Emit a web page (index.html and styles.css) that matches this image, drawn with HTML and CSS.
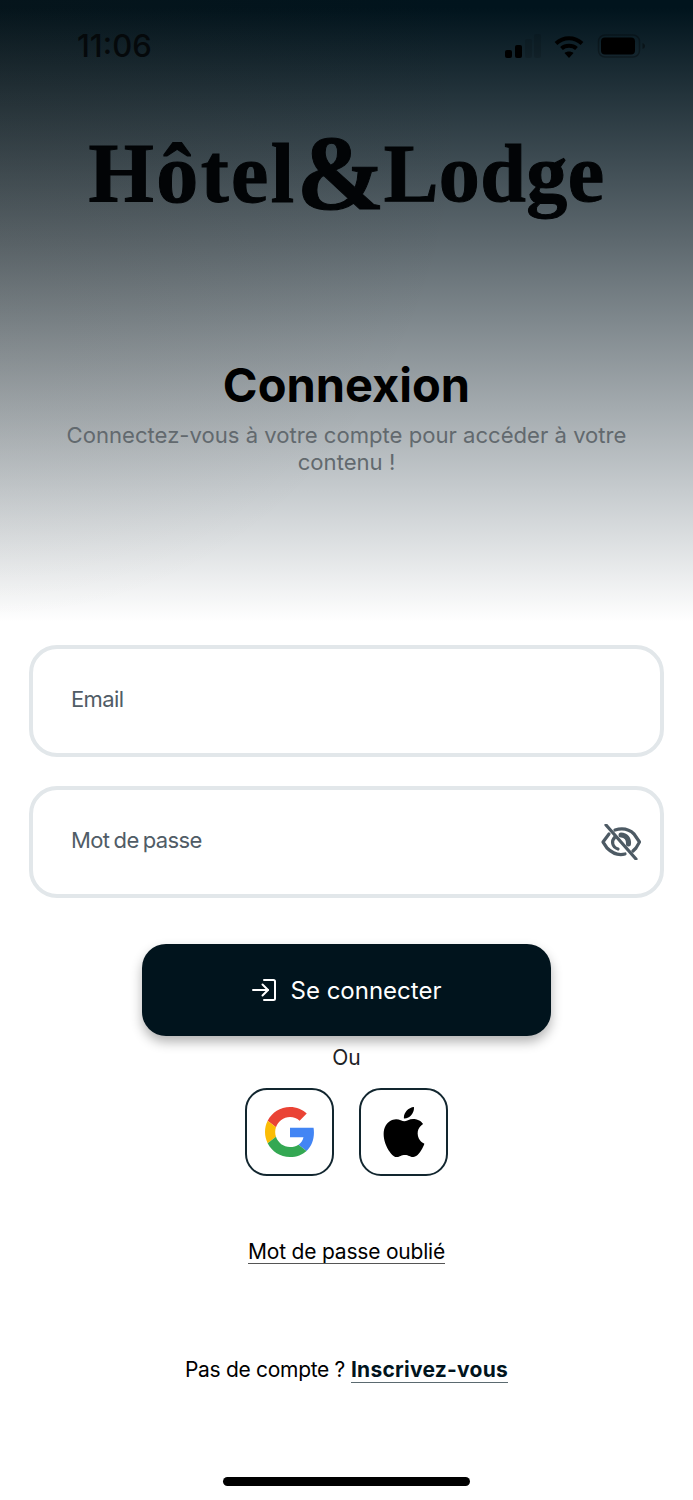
FILE: index.html
```html
<!DOCTYPE html>
<html lang="fr">

<head>
  <meta charset="UTF-8">
  <meta name="viewport" content="width=device-width, initial-scale=1.0">
  <title>Connexion</title>
  <link rel="stylesheet" href="styles.css">
</head>

<body>
  <header class="hero">
    <div class="status-bar">
      <span class="time">11:06</span>
      <div class="status-icons">
        <svg class="signal" viewBox="0 0 36 24" fill="#000">
          <rect x="0" y="16" width="7" height="8" rx="2" />
          <rect x="10" y="11" width="7" height="13" rx="2" />
          <rect x="20" y="5" width="7" height="19" rx="2" opacity="0.12" />
          <rect x="29" y="0" width="7" height="24" rx="2" opacity="0.12" />
        </svg>
        <svg class="wifi" viewBox="0 0 30 23" fill="none" stroke="#000" stroke-width="4">
          <path d="M2 8.500C9.500 1.500 20.500 1.500 28 8.500" />
          <path d="M7.500 13.500C11.500 9.800 18.500 9.800 22.500 13.500" />
          <path d="M15 23 10.500 18C13 16 17 16 19.500 18Z" fill="#000" stroke="none" />
        </svg>
        <svg class="battery" viewBox="0 0 48 24">
          <rect x="1" y="1" width="41" height="22" rx="6.500" fill="none" stroke="#000" stroke-opacity="0.3" stroke-width="1.500" />
          <rect x="3.500" y="3.500" width="34" height="17" rx="4" fill="#000" />
          <path d="M45 9c1.500.5 2.500 1.500 2.500 3s-1 2.500-2.500 3z" fill="#000" fill-opacity="0.4" />
        </svg>
      </div>
    </div>

    <div class="logo"><span class="logo-hotel">Hôtel</span><span class="logo-amp">&amp;</span><span>Lodge</span></div>

    <h1>Connexion</h1>
    <p class="subtitle">Connectez-vous à votre compte pour accéder à votre contenu !</p>
  </header>

  <main>
    <form class="fields">
      <div class="field"><span>Email</span></div>
      <div class="field">
        <span>Mot de passe</span>
        <svg class="eye" viewBox="0 0 40 36" fill="none" stroke="#4d5a64" stroke-width="3.200" stroke-linecap="round" stroke-linejoin="round">
          <path d="M8 10 2 18l4 6c6 6 12 7.500 18 6" />
          <path d="M14 6c7-2 14-1 19 4l5.500 8-3.500 6-3 3" />
          <path d="M14 13c-4 4-3 10 3 12" />
          <path d="M20 11c5 0 8 4 7.500 9" stroke-width="5" />
          <path d="M5 1l30 34" />
        </svg>
      </div>
    </form>

    <a class="submit">
      <svg viewBox="0 0 24 22" fill="none" stroke="#fff" stroke-width="2" stroke-linecap="round" stroke-linejoin="round">
        <path d="M12 1h9.500a1.500 1.500 0 0 1 1.500 1.500v17a1.500 1.500 0 0 1-1.500 1.500H12" />
        <path d="M1 11h15" />
        <path d="M10.500 5.500 16 11l-5.500 5.500" />
      </svg>
      Se connecter
    </a>

    <p class="or">Ou</p>

    <div class="socials">
      <a class="social">
        <svg class="google" viewBox="0 0 48 48">
          <path fill="#EA4335" d="M24 9.500c3.540 0 6.710 1.220 9.210 3.600l6.850-6.850C35.900 2.380 30.470 0 24 0 14.620 0 6.510 5.380 2.560 13.220l7.980 6.190C12.430 13.720 17.740 9.500 24 9.500z" />
          <path fill="#4285F4" d="M46.980 24.550c0-1.570-.15-3.090-.38-4.550H24v9.020h12.940c-.58 2.960-2.260 5.480-4.780 7.180l7.730 6c4.510-4.180 7.090-10.360 7.090-17.650z" />
          <path fill="#FBBC05" d="M10.530 28.590c-.48-1.450-.76-2.990-.76-4.590s.27-3.140.76-4.590l-7.980-6.190C.92 16.460 0 20.120 0 24c0 3.880.92 7.540 2.560 10.780l7.970-6.190z" />
          <path fill="#34A853" d="M24 48c6.480 0 11.930-2.130 15.890-5.810l-7.730-6c-2.150 1.450-4.920 2.300-8.160 2.300-6.260 0-11.570-4.220-13.470-9.910l-7.980 6.190C6.510 42.620 14.620 48 24 48z" />
        </svg>
      </a>
      <a class="social">
        <svg class="apple" viewBox="0 0 24 24" fill="#000">
          <path d="M12.152 6.896c-.948 0-2.415-1.078-3.960-1.040-2.040.027-3.910 1.183-4.961 3.014-2.117 3.675-.546 9.103 1.519 12.090 1.013 1.454 2.208 3.090 3.792 3.039 1.520-.065 2.090-.987 3.935-.987 1.831 0 2.350.987 3.960.948 1.637-.026 2.676-1.480 3.676-2.948 1.156-1.688 1.636-3.325 1.662-3.415-.039-.013-3.182-1.221-3.220-4.857-.026-3.040 2.480-4.494 2.597-4.559-1.429-2.090-3.623-2.324-4.390-2.376-2-.156-3.675 1.090-4.610 1.090zM15.530 3.830c.843-1.012 1.400-2.427 1.245-3.830-1.207.052-2.662.805-3.532 1.818-.780.896-1.454 2.338-1.273 3.714 1.338.104 2.715-.688 3.559-1.701" />
        </svg>
      </a>
    </div>

    <a class="forgot">Mot de passe oublié</a>

    <p class="signup"><span class="signup-text">Pas de compte ?</span> <a>Inscrivez-vous</a></p>
  </main>

  <div class="home-bar"></div>
</body>

</html>
```

FILE: styles.css
```css
body {
  display: flex;
  flex-direction: column;
  margin: 0;
  font-family: Inter, "Liberation Sans", sans-serif;
  background: #fff;
  color: #000;
  height: 1500px;
  overflow: hidden;
}

.hero {
  display: flex;
  flex-direction: column;
  align-items: center;
  height: 625px;
  background: radial-gradient(ellipse 480px 560px at 0 60px, hsl(30deg 30% 10% / 0.14), hsl(30deg 30% 10% / 0)), linear-gradient(to bottom, #01141d 0, #01141d 8px, #5d686e 240px, #c6cbce 490px, #fff 622px);
}

.status-bar {
  align-self: stretch;
  display: flex;
  justify-content: space-between;
  align-items: center;
  padding: 28px 47px 0 77px;
}

.time {
  font-size: 31px;
  font-weight: 500;
  line-height: 36px;
  color: #05090b;
}

.status-icons {
  display: flex;
  align-items: center;
  gap: 13px;
}

.signal {
  width: 36px;
  height: 24px;
}

.wifi {
  width: 30px;
  height: 23px;
}

.battery {
  width: 49px;
  height: 24px;
}

.logo {
  display: flex;
  align-items: flex-end;
  margin-top: 62px;
  font-family: "Liberation Serif", serif;
  font-weight: 700;
  font-size: 82px;
  line-height: 96px;
  letter-spacing: 0.400px;
  -webkit-text-stroke: 1px #020406;
  color: #020406;
}

.logo-hotel {
  font-size: 84px;
  letter-spacing: 2.400px;
}

.logo-amp {
  font-size: 106px;
  line-height: 96px;
  letter-spacing: -1px;
}

h1 {
  margin: 135px 0 0;
  font-size: 47px;
  font-weight: 700;
  line-height: 56px;
}

.subtitle {
  margin: 9px 0 0;
  width: 590px;
  text-align: center;
  font-size: 22.100px;
  line-height: 27px;
  color: #62696e;
}

main {
  display: flex;
  flex-direction: column;
  align-items: center;
  padding: 20px 29px 0;
}

.fields {
  align-self: stretch;
  display: flex;
  flex-direction: column;
  gap: 29px;
}

.field {
  display: flex;
  justify-content: space-between;
  align-items: center;
  box-sizing: border-box;
  height: 112px;
  padding: 0 19px 4px 38px;
  border: 4px solid #e2e7ea;
  border-radius: 28px;
  font-size: 22px;
  letter-spacing: -0.600px;
  word-spacing: -1.500px;
  color: #505c66;
}

.eye {
  width: 40px;
  height: 36px;
  margin-top: 4px;
}

.submit {
  display: flex;
  justify-content: center;
  align-items: center;
  gap: 15px;
  width: 409px;
  height: 92px;
  margin-top: 46px;
  background: #01141d;
  border-radius: 24px;
  box-shadow: 0 6px 12px hsl(0deg 0% 0% / 0.3);
  color: #fff;
  font-size: 24px;
}

.submit>svg {
  width: 24px;
  height: 22px;
}

.or {
  margin: 9px 0 0;
  font-size: 21px;
  line-height: 26px;
  color: #1c2226;
}

.socials {
  display: flex;
  gap: 25px;
  margin-top: 17px;
}

.social {
  display: flex;
  justify-content: center;
  align-items: center;
  box-sizing: border-box;
  width: 89px;
  height: 88px;
  border: 2px solid #12262f;
  border-radius: 22px;
}

.google,
.apple {
  width: 50px;
  height: 50px;
}

.forgot {
  margin-top: 65px;
  font-size: 21px;
  line-height: 22px;
  letter-spacing: -0.200px;
  border-bottom: 1.500px solid #555;
}

.signup {
  margin: 95px 0 0;
  font-size: 21px;
  line-height: 22px;
}

.signup-text {
  letter-spacing: -0.300px;
}

.signup>a {
  font-weight: 700;
  letter-spacing: 0.250px;
  color: #01141d;
  border-bottom: 1.500px solid #5b6a70;
}

.home-bar {
  flex: none;
  width: 247px;
  height: 9px;
  margin: auto auto 14px;
  background: #000;
  border-radius: 5px;
}
```
